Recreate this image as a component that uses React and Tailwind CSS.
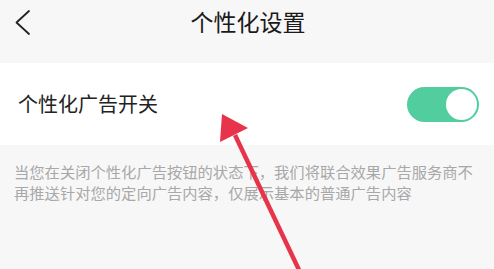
import React from "react";

export default function App() {
  const font = { fontFamily: '"Noto Sans CJK SC", "Noto Sans", sans-serif' };
  return (
    <div className="relative w-[494px] h-[269px] overflow-hidden bg-[#f7f7f7]" style={font}>
      <div className="relative h-[63px] flex items-center justify-center bg-[#f7f7f7]">
        <svg className="absolute left-[12px] top-[8px]" width="24" height="30" viewBox="0 0 24 30">
          <polyline points="17,3 4.5,14.5 17,26" fill="none" stroke="#222" strokeWidth="1.8" strokeLinecap="round" strokeLinejoin="round" />
        </svg>
        <div className="text-[23px] leading-none text-[#1a1a1a] -mt-[21px] ml-[2px]">个性化设置</div>
      </div>
      <div className="h-[82px] bg-white flex items-center justify-between pl-[18px] pr-[15px]">
        <div className="text-[20px] leading-none text-[#222]">个性化广告开关</div>
        <div className="w-[72px] h-[35px] rounded-full bg-[#52cd9e] flex items-center justify-end pr-[2px]">
          <div className="w-[31px] h-[31px] rounded-full bg-white"></div>
        </div>
      </div>
      <div className="pl-[14px] pr-[8px] pt-[16px] text-[15.3px] leading-[21px] text-[#a8a8a8]">
        当您在关闭个性化广告按钮的状态下，我们将联合效果广告服务商不再推送针对您的定向广告内容，仅展示基本的普通广告内容
      </div>
      <svg className="absolute left-0 top-0 pointer-events-none" width="494" height="269" viewBox="0 0 494 269">
        <line x1="235" y1="135" x2="300" y2="272" stroke="#e8344a" strokeWidth="4.5" />
        <polygon points="222,114 248,128 220,142" fill="#e8344a" />
      </svg>
    </div>
  );
}
